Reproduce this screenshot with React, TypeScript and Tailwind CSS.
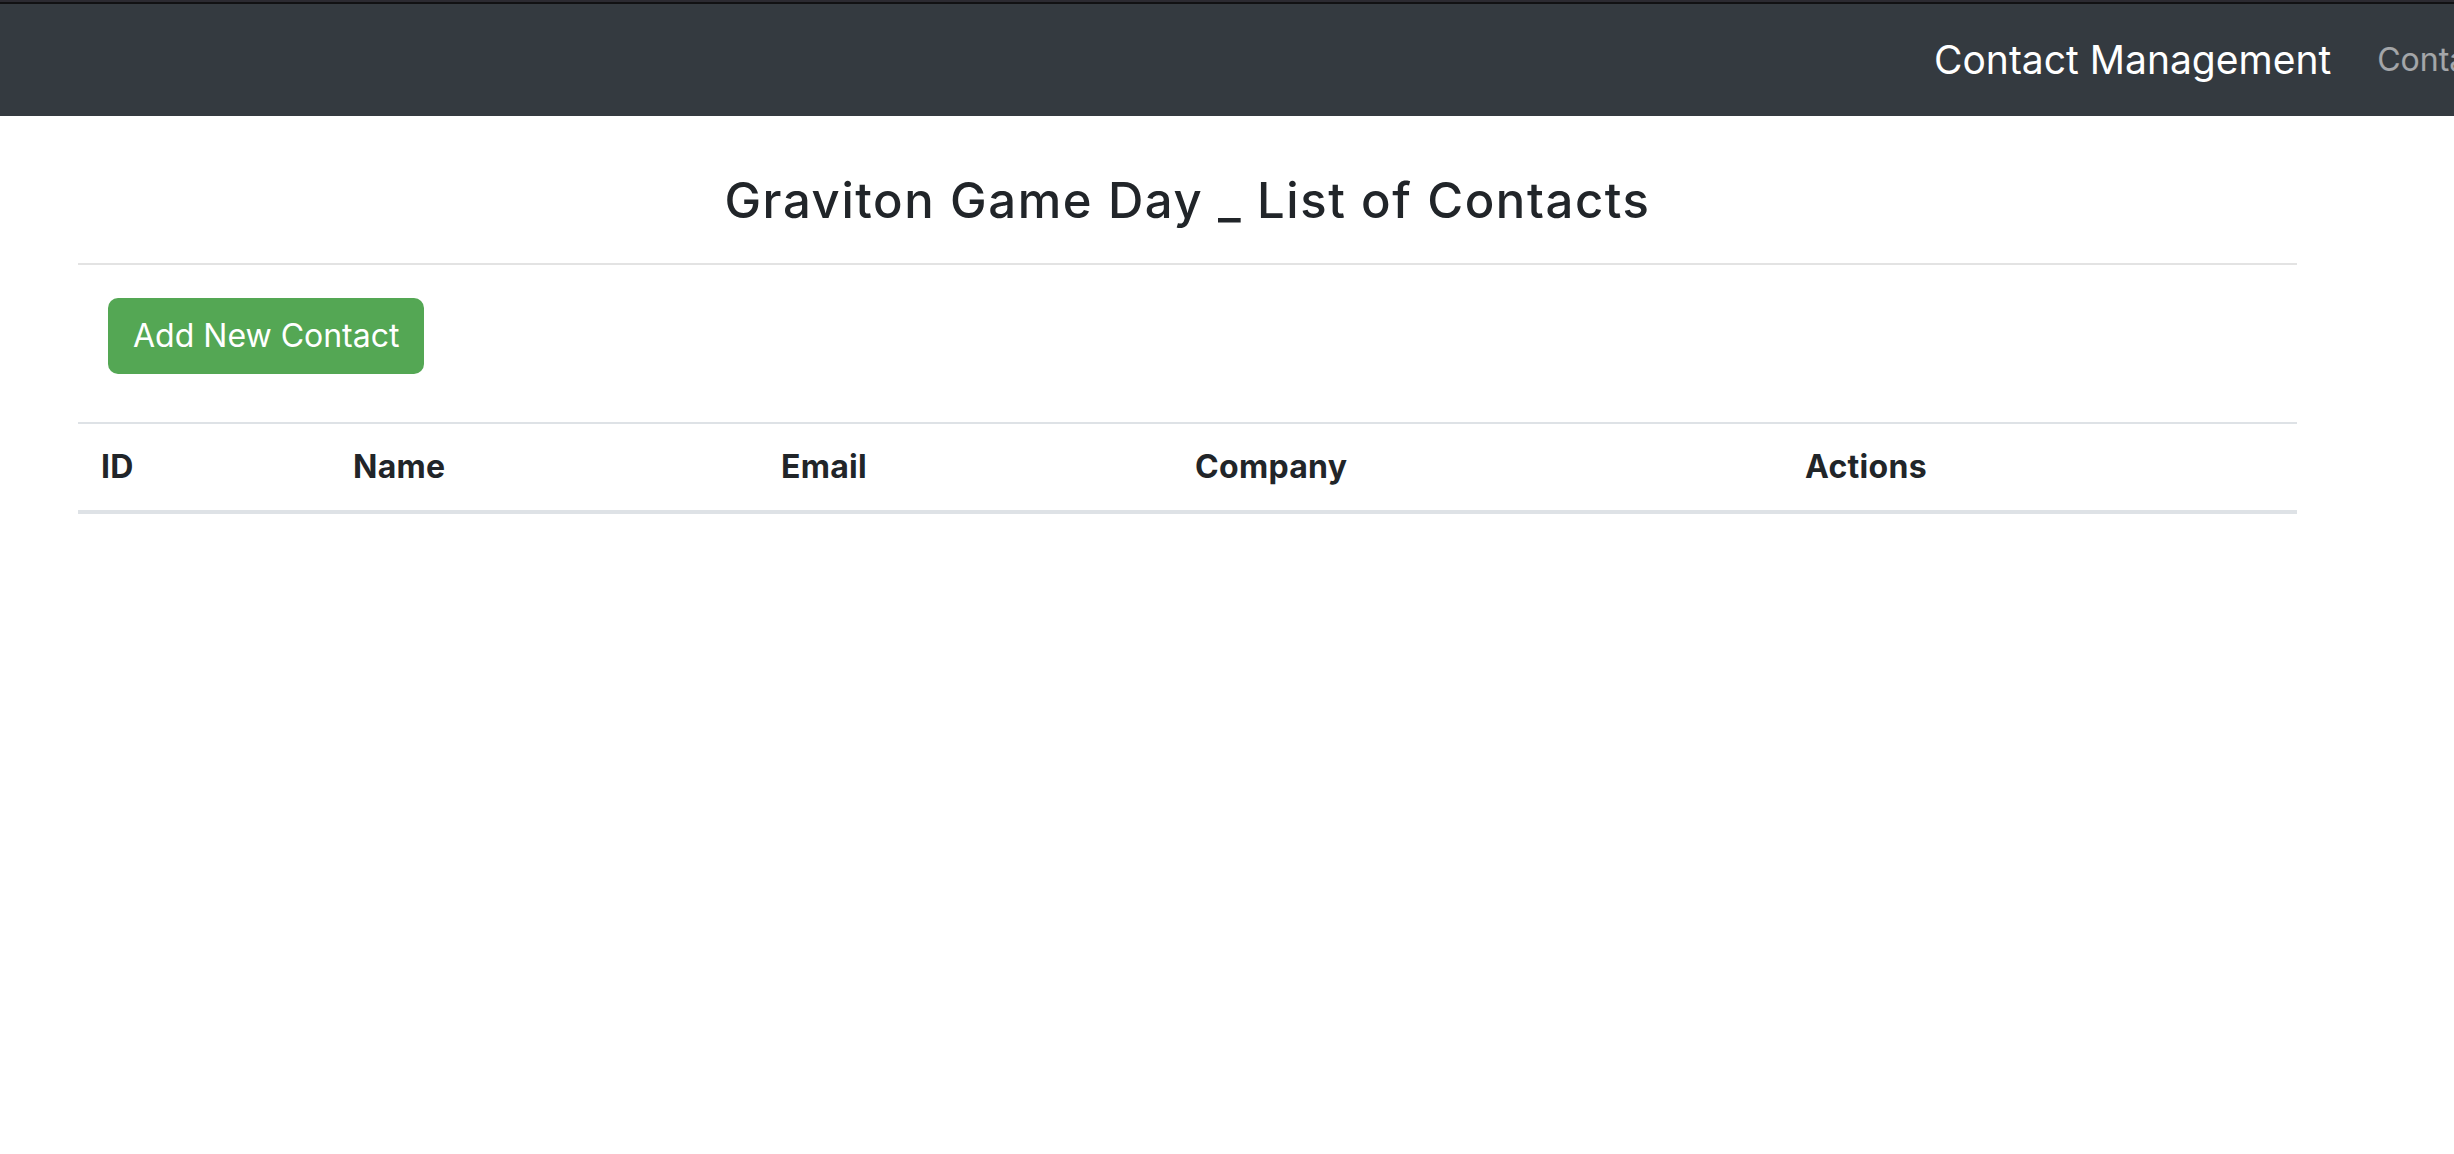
export default function App() {
  const columns = [
    { label: 'ID', width: 'w-[252px]' },
    { label: 'Name', width: 'w-[428px]' },
    { label: 'Email', width: 'w-[414px]' },
    { label: 'Company', width: 'w-[610px]' },
    { label: 'Actions', width: '' },
  ];

  return (
    <div className="min-h-screen overflow-x-hidden bg-white font-['Inter','Liberation_Sans',sans-serif] text-[#212529]">
      {/* window strip */}
      <div className="h-[2px] bg-[#2b2a31]" />
      <div className="h-[2px] bg-[#111113]" />

      {/* Navbar */}
      <nav className="flex h-[112px] items-center overflow-hidden whitespace-nowrap bg-[#343a40]">
        <div className="ml-[1934px] flex shrink-0 items-center gap-[46px]">
          <span className="text-[39px] leading-[1.5] text-white">Contact Management</span>
          <span className="text-[32px] leading-[1.5] text-white/55">Contacts</span>
        </div>
      </nav>

      <main className="ml-[78px] w-[2219px]">
        <h2 className="mt-[56px] text-center text-[49px] font-medium leading-[1.2] tracking-[1.6px]">
          Graviton Game Day _ List of Contacts
        </h2>
        <div className="mt-[32px] border-t-2 border-[#e3e3e3]" />

        <div className="pl-[30px] pt-[33px]">
          <button className="h-[76px] rounded-[10px] bg-[#54a754] px-[25px] text-[32px] leading-[1.5] text-white">
            Add New Contact
          </button>
        </div>

        {/* Contacts table */}
        <table className="mt-[48px] w-full border-collapse">
          <thead>
            <tr className="border-t-2 border-b-4 border-[#dee2e6]">
              {columns.map((col) => (
                <th
                  key={col.label}
                  className={`${col.width} py-[19px] pl-[23px] text-left text-[32px] font-bold leading-[1.5] tracking-[0.3px]`}
                >
                  {col.label}
                </th>
              ))}
            </tr>
          </thead>
          <tbody />
        </table>
      </main>
    </div>
  );
}
